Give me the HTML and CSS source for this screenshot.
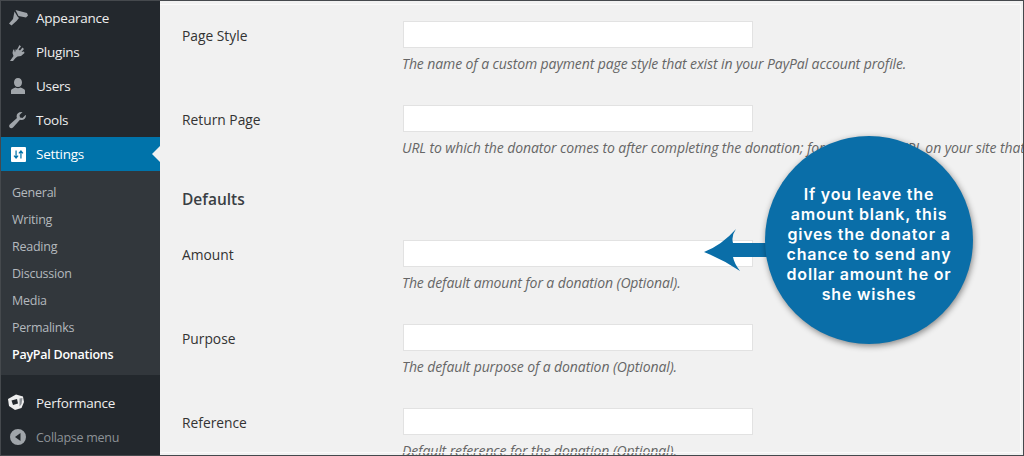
FILE: index.html
```html
<!DOCTYPE html>
<html lang="en">
<head>
<meta charset="utf-8">
<title>PayPal Donations</title>
<link rel="stylesheet" href="styles.css">
</head>
<body>
<div class="page">
  <nav class="sidebar">
    <ul class="menu">
      <li class="item"><svg class="icon" viewBox="0 0 20 20"><path d="M7.500 2 19 5l1 2.500-2 2L10.500 8z"/><path d="M6.500 3.500 9.500 8.500 11 10 8.500 13 3.500 17.500 1 15.500 5 11z"/></svg>Appearance</li>
      <li class="item"><svg class="icon" viewBox="0 0 20 20"><path d="M11.500 3 13 4.500 10.500 7.500 12 8.500 14.500 5.500 16 7 13.500 10 16 9.500 16.500 11 13 14l-3.500.5-2 1.500-2.500 3H2l3.500-5-1-3L5 8.500l1-1.500 1 3.500.8-3.500 1 1z"/></svg>Plugins</li>
      <li class="item"><svg class="icon" viewBox="0 0 20 20"><path d="M10 2c2.500 0 4 2 4 4.500S12.500 11 10 11 6 9 6 6.500 7.500 2 10 2zM3 14.500c0-1.500 3-2.500 4.500-3 1.500 1 3.500 1 5 0 1.500.5 4.500 1.500 4.500 3V18H3z"/></svg>Users</li>
      <li class="item"><svg class="icon" viewBox="0 0 20 20"><path d="M18 5.500c0 2.500-2 4.500-4.500 4.500-.6 0-1 0-1.500-.3L5 17.500c-1 1-2.500 1-3.300 0-.8-1-.7-2.200.3-3.200L9 8c-.3-.6-.4-1.200-.4-1.800C8.600 3.500 11 1.500 14.500 2L11.500 5l.5 2.500 2.500.5 3-3c.3.200.5.300.5.500z"/></svg>Tools</li>
      <li class="item current">
        <span class="settings-icon"><svg viewBox="0 0 16 16"><path d="M5 3v9M2.500 9.500 5 12.500 7.500 9.500M11 13V4M8.500 6.500 11 3.500 13.500 6.500"/></svg></span>Settings
        <span class="pointer"></span>
      </li>
    </ul>
    <ul class="submenu">
      <li>General</li>
      <li>Writing</li>
      <li>Reading</li>
      <li>Discussion</li>
      <li>Media</li>
      <li>Permalinks</li>
      <li class="active">PayPal Donations</li>
    </ul>
    <ul class="menu lower">
      <li class="item"><svg class="icon perf" viewBox="0 0 20 20"><path class="perf-body" d="M8 1.500 15 3.500 16 9 13.500 15 7 17 1 13 0 6z"/><path class="perf-hole" d="M3.500 7.500 9 6 10 10.500 5 12z"/><path class="perf-side" d="M11.500 5.500 14.500 5 13.500 11 11.500 13.500z"/></svg>Performance</li>
      <li class="item collapse"><svg class="icon" viewBox="0 0 20 20"><path fill-rule="evenodd" d="M10 2a8 8 0 1 1 0 16 8 8 0 0 1 0-16zM12.500 6 7 10l5.500 4z"/></svg>Collapse menu</li>
    </ul>
  </nav>
  <main class="content">
    <section class="row">
      <div class="label">Page Style</div>
      <div class="field">
        <div class="input"></div>
        <p class="desc">The name of a custom payment page style that exist in your PayPal account profile.</p>
      </div>
    </section>
    <section class="row">
      <div class="label">Return Page</div>
      <div class="field">
        <div class="input"></div>
        <p class="desc">URL to which the donator comes to after completing the donation; for example, a URL on your site that</p>
      </div>
    </section>
    <h2 class="heading">Defaults</h2>
    <section class="row">
      <div class="label">Amount</div>
      <div class="field">
        <div class="input"></div>
        <p class="desc">The default amount for a donation (Optional).</p>
      </div>
    </section>
    <section class="row">
      <div class="label">Purpose</div>
      <div class="field">
        <div class="input"></div>
        <p class="desc">The default purpose of a donation (Optional).</p>
      </div>
    </section>
    <section class="row">
      <div class="label">Reference</div>
      <div class="field">
        <div class="input"></div>
        <p class="desc">Default reference for the donation (Optional).</p>
      </div>
    </section>
    <aside class="callout">
      <svg class="arrow" viewBox="0 0 70 46"><path d="M0 25Q18 18 32 2 27 9 29 16H70V30H29Q30 36 36 44 18 32 0 25z"/></svg>
      <div class="bubble">If you leave the<br>amount blank, this<br>gives the donator a<br>chance to send any<br>dollar amount he or<br>she wishes</div>
    </aside>
  </main>
</div>
</body>
</html>
```
FILE: styles.css
```css
* { box-sizing: border-box; }
html, body { margin: 0; padding: 0; }
body { width: 1024px; height: 456px; overflow: hidden; background: #f1f1f1; font-family: "Open Sans", "Noto Sans", sans-serif; }
ul { list-style: none; margin: 0; padding: 0; }
.page { position: relative; display: flex; width: 1024px; height: 456px; overflow: hidden; }
.page::after { content: ""; position: absolute; inset: 0; border: 1px solid #45494d; pointer-events: none; }

.sidebar { flex: 0 0 160px; width: 160px; height: 456px; background: #23282d; padding-top: 1px; overflow: hidden; }
.item { position: relative; display: flex; align-items: center; height: 34px; padding-left: 8px; font-size: 13.500px; letter-spacing: -0.25px; color: #eee; }
.icon { width: 20px; height: 20px; margin-right: 8px; fill: #a0a5aa; flex: none; }
.current { background: #0073aa; color: #fff; }
.settings-icon { display: flex; align-items: center; justify-content: center; width: 15px; height: 15px; margin: 0 10px 0 3px; background: #fff; border-radius: 1px; flex: none; }
.settings-icon svg { width: 13px; height: 13px; fill: none; stroke: #0073aa; stroke-width: 1.500; }
.pointer { position: absolute; right: 0; top: 9px; border: 8px solid transparent; border-right-color: #f1f1f1; border-left-width: 0; }

.submenu { background: #32373c; padding: 8px 0 7px; height: 204px; }
.submenu li { height: 27px; line-height: 27px; padding-left: 12px; font-size: 12.500px; letter-spacing: -0.25px; color: #b4b9be; }
.submenu .active { color: #fff; font-weight: 600; }

.lower { padding-top: 11px; }
.perf { fill: none; }
.perf-body { fill: #eee; }
.perf-hole { fill: #23282d; }
.perf-side { fill: #8a8f94; }
.collapse { color: #8d9296; font-size: 12.500px; }

.content { position: relative; flex: 1; min-width: 0; height: 456px; padding: 21px 0 0 22px; }
.content::after { content: ""; position: absolute; inset: 4px 3px 3px 0; border: 1px solid #fafafa; border-left: 0; pointer-events: none; }
.row { display: flex; height: 84px; }
.label { width: 221px; flex: none; padding-top: 6px; font-size: 13.800px; letter-spacing: 0; line-height: 18px; color: #333; }
.field { flex: none; width: 619px; }
.input { width: 350px; height: 27px; background: #fff; border: 1px solid #e2e2e2; }
.desc { margin: 7px 0 0 -1px; font-size: 14px; line-height: 18px; font-style: italic; color: #666; white-space: nowrap; letter-spacing: -0.1px; }
.heading { margin: 0; height: 51px; font-size: 15.500px; font-weight: 600; line-height: 20px; color: #3a3f44; letter-spacing: 0; }

.callout { position: absolute; left: 544px; top: 135px; width: 320px; height: 210px; }
.arrow { position: absolute; left: 0; top: 92px; width: 70px; height: 46px; fill: #0a6ea8; }
.bubble { position: absolute; left: 61px; top: 1px; width: 208px; height: 208px; padding-top: 48px; border-radius: 50%; background: #0a6ea8; box-shadow: 1px 2px 6px rgba(0,0,0,.45); color: #fff; font-family: Inter, Lato, sans-serif; font-size: 16px; font-weight: 600; line-height: 20px; letter-spacing: 0.8px; text-align: center; }
```
